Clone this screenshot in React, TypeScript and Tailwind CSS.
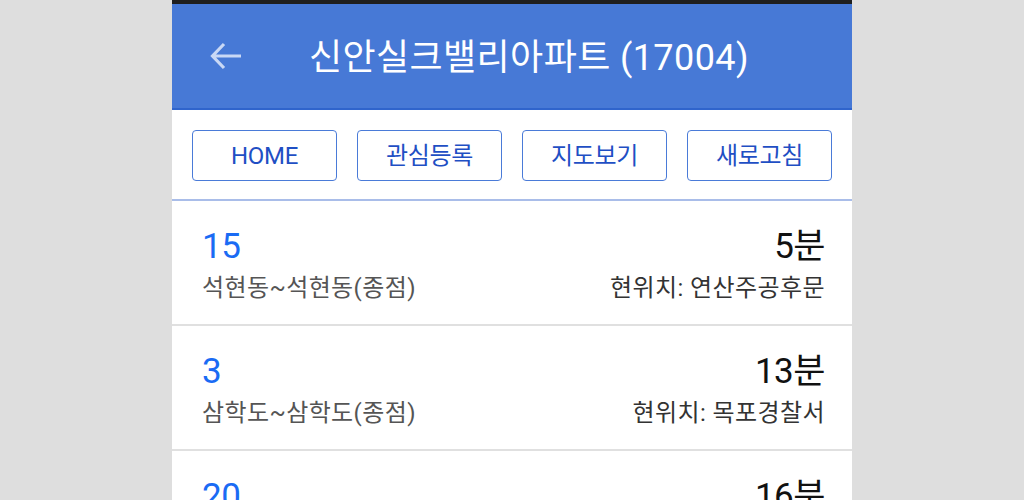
type Arrival = {
  route: string
  path: string
  minutes: string
  location: string
}

const arrivals: Arrival[] = [
  { route: '15', path: '석현동~석현동(종점)', minutes: '5분', location: '현위치: 연산주공후문' },
  { route: '3', path: '삼학도~삼학도(종점)', minutes: '13분', location: '현위치: 목포경찰서' },
  { route: '20', path: '용해동~용해동(종점)', minutes: '16분', location: '현위치: 하당신도심' },
]

const buttons = ['HOME', '관심등록', '지도보기', '새로고침']

function BackArrow() {
  return (
    <svg width="32" height="28" viewBox="0 0 32 28" fill="none" className="shrink-0">
      <path d="M14 2 L2.5 14 L14 26 M3 14 H31" stroke="#c9d8f5" strokeWidth="3.2" />
    </svg>
  )
}

export default function App() {
  return (
    <div className="h-[500px] w-full overflow-hidden bg-[#dedede] font-['Roboto','Noto_Sans_CJK_KR',sans-serif]">
      <div className="mx-auto flex h-full w-[680px] flex-col bg-white">
        {/* status bar strip */}
        <div className="h-[4px] shrink-0 bg-[#1f1f1f]" />

        {/* title bar */}
        <div className="flex h-[106px] shrink-0 items-center border-b-2 border-[#2f64cc] bg-[#4779d6] pl-[38px]">
          <BackArrow />
          <h1 className="ml-[67px] pt-[4px] text-[36px] leading-none tracking-[0.4px] text-white">
            신안실크밸리아파트 (17004)
          </h1>
        </div>

        {/* action buttons */}
        <div className="flex shrink-0 gap-[20px] border-b-2 border-[#a9bde9] px-[20px] pb-[18px] pt-[20px]">
          {buttons.map((label) => (
            <button
              key={label}
              className="flex h-[51px] flex-1 items-center justify-center rounded-[4px] border border-[#4a7bd8] text-[24px] tracking-[-0.3px] text-[#1f4fc4]"
            >
              {label}
            </button>
          ))}
        </div>

        {/* arrival list */}
        <div className="flex flex-col">
          {arrivals.map((a) => (
            <div
              key={a.route}
              className="flex h-[125px] shrink-0 justify-between border-b-2 border-[#e0e0e0] pl-[30px] pr-[27px] pt-[26px]"
            >
              <div className="flex flex-col">
                <span className="text-[35px] leading-[40px] tracking-[-0.5px] text-[#1a6bf4]">{a.route}</span>
                <span className="mt-[6px] text-[24px] leading-[30px] tracking-[0.4px] text-[#555555]">
                  {a.path}
                </span>
              </div>
              <div className="flex flex-col items-end">
                <span className="text-[35px] leading-[40px] tracking-[-0.5px] text-[#111111]">{a.minutes}</span>
                <span className="mt-[6px] text-[24px] leading-[30px] tracking-[0.4px] text-[#333333]">
                  {a.location}
                </span>
              </div>
            </div>
          ))}
        </div>
      </div>
    </div>
  )
}
